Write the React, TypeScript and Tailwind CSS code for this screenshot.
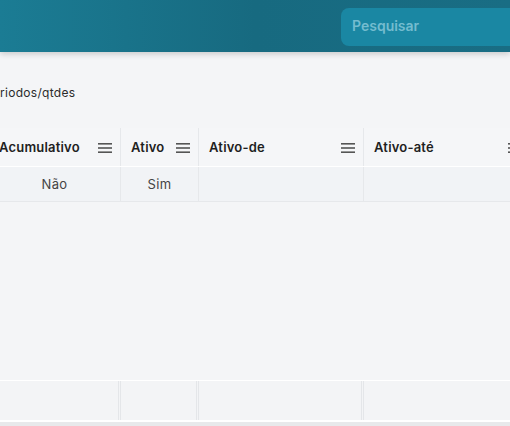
import React from 'react';

const columns = [
  { label: 'Acumulativo', width: 132, value: 'Não' },
  { label: 'Ativo', width: 78, value: 'Sim' },
  { label: 'Ativo-de', width: 165, value: '' },
  { label: 'Ativo-até', width: 166, value: '' },
];

const MenuIcon = () => (
  <svg width="14" height="10" viewBox="0 0 14 10" className="shrink-0">
    <rect x="0" y="0" width="14" height="1.6" fill="#555" />
    <rect x="0" y="4.2" width="14" height="1.6" fill="#555" />
    <rect x="0" y="8.4" width="14" height="1.6" fill="#555" />
  </svg>
);

export default function App() {
  return (
    <div
      className="w-[510px] h-[426px] overflow-hidden bg-[#f4f5f7] flex flex-col"
      style={{ fontFamily: 'Inter, "Open Sans", sans-serif' }}
    >
      {/* Top bar */}
      <header className="h-[52px] shrink-0 flex items-start justify-end pt-[8px] bg-gradient-to-r from-[#1b7c94] via-[#176a80] to-[#196d84] shadow-[0_2px_6px_rgba(0,0,0,0.18)] relative z-10">
        <div className="w-[180px] h-[38px] -mr-[11px] rounded-lg bg-[#1a87a3] flex items-center px-[11px] pb-[4px]">
          <span className="text-[14px] font-semibold text-[#74bccf]">Pesquisar</span>
        </div>
      </header>

      {/* Breadcrumb */}
      <div className="h-[76px] shrink-0 flex items-center pt-[5px]">
        <span className="text-[12px] tracking-[0.3px] text-[#2b2b2b] whitespace-nowrap">riodos/qtdes</span>
      </div>

      {/* Grid */}
      <div className="-ml-[11px] flex flex-col flex-1">
        <div className="flex h-[39px] bg-[#f5f6f8] border-b border-white">
          {columns.map((c, i) => (
            <div
              key={c.label}
              className={`shrink-0 flex items-center justify-between pl-[10px] pr-[8px] pt-[1px] ${i < columns.length - 1 ? 'border-r border-[#e6e8eb]' : ''}`}
              style={{ width: c.width }}
            >
              <span className="text-[13px] font-semibold tracking-[0.2px] text-[#1f1f1f] whitespace-nowrap">{c.label}</span>
              <MenuIcon />
            </div>
          ))}
        </div>
        <div className="flex h-[35px] bg-[#f1f3f6] border-b border-[#e6e8eb]">
          {columns.map((c, i) => (
            <div
              key={c.label}
              className={`shrink-0 flex items-center justify-center pt-[2px] ${i < columns.length - 1 ? 'border-r border-[#e6e8eb]' : ''}`}
              style={{ width: c.width }}
            >
              <span className="text-[13px] tracking-[0.3px] text-[#444]">{c.value}</span>
            </div>
          ))}
        </div>
        <div className="flex-1" />
        <div className="flex h-[42px] border-t border-white border-b-2 border-b-white bg-[#f3f4f6]">
          {columns.map((c, i) => (
            <div
              key={c.label}
              className={`shrink-0 ${i < columns.length - 1 ? 'border-r-[3px] border-double border-[#e4e6e9]' : ''}`}
              style={{ width: c.width }}
            />
          ))}
        </div>
        <div className="h-[4px] bg-[#e8e9eb]" />
      </div>
    </div>
  );
}
